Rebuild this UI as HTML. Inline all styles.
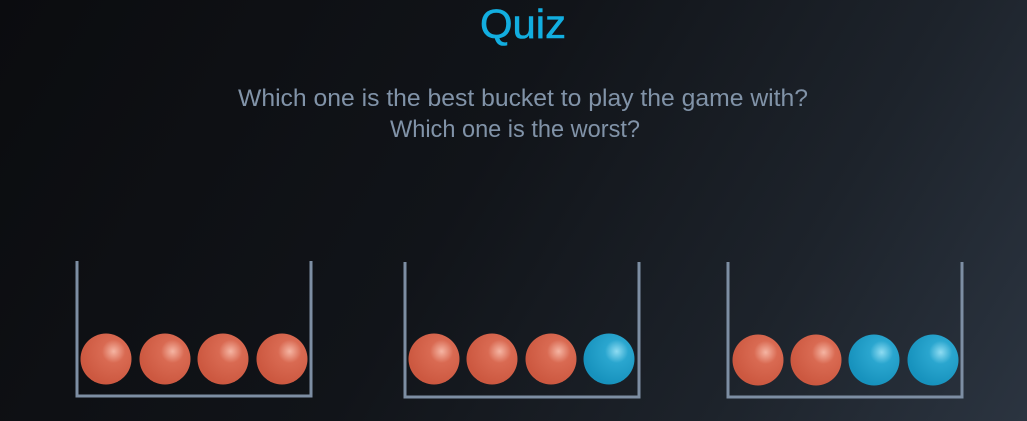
<!DOCTYPE html>
<html><head><style>
html,body{margin:0;padding:0;}
body{width:1027px;height:421px;overflow:hidden;background:linear-gradient(120deg,#0b0c0f 0%,#111419 45%,#1d232b 75%,#2b3440 100%);}
</style></head><body>
<svg width="1027" height="421" xmlns="http://www.w3.org/2000/svg" style="position:absolute;left:0;top:0">
<defs>
<radialGradient id="r" cx="0.65" cy="0.35" r="0.65">
<stop offset="0" stop-color="#f5b5a3"/><stop offset="0.35" stop-color="#d96a52"/><stop offset="1" stop-color="#cc5840"/>
</radialGradient>
<radialGradient id="b" cx="0.65" cy="0.35" r="0.65">
<stop offset="0" stop-color="#8fdcf2"/><stop offset="0.35" stop-color="#2aa6cf"/><stop offset="1" stop-color="#1792bd"/>
</radialGradient>
</defs>
<text x="480" y="38" textLength="86" lengthAdjust="spacingAndGlyphs" font-family="Liberation Sans, sans-serif" font-size="41" fill="#12aee0" stroke="#12aee0" stroke-width="0.6">Quiz</text>
<g font-family="Liberation Sans, sans-serif" font-size="24" fill="#8193a8">
<text x="238" y="106" textLength="570" lengthAdjust="spacingAndGlyphs">Which one is the best bucket to play the game with?</text>
<text x="390" y="137" textLength="250" lengthAdjust="spacingAndGlyphs">Which one is the worst?</text>
</g>
<g fill="none" stroke="#7d8ea3" stroke-width="3">
<path d="M77 261 V396 H311 V261"/>
<path d="M405 262 V397 H639 V262"/>
<path d="M728 262 V397 H962 V262"/>
</g>
<g>
<circle cx="106" cy="359" r="25.5" fill="url(#r)"/>
<circle cx="165" cy="359" r="25.5" fill="url(#r)"/>
<circle cx="223" cy="359" r="25.5" fill="url(#r)"/>
<circle cx="282" cy="359" r="25.5" fill="url(#r)"/>
<circle cx="434" cy="359" r="25.5" fill="url(#r)"/>
<circle cx="492" cy="359" r="25.5" fill="url(#r)"/>
<circle cx="551" cy="359" r="25.5" fill="url(#r)"/>
<circle cx="609" cy="359" r="25.5" fill="url(#b)"/>
<circle cx="758" cy="360" r="25.5" fill="url(#r)"/>
<circle cx="816" cy="360" r="25.5" fill="url(#r)"/>
<circle cx="874" cy="360" r="25.5" fill="url(#b)"/>
<circle cx="933" cy="360" r="25.5" fill="url(#b)"/>
</g>
</svg>
</body></html>
